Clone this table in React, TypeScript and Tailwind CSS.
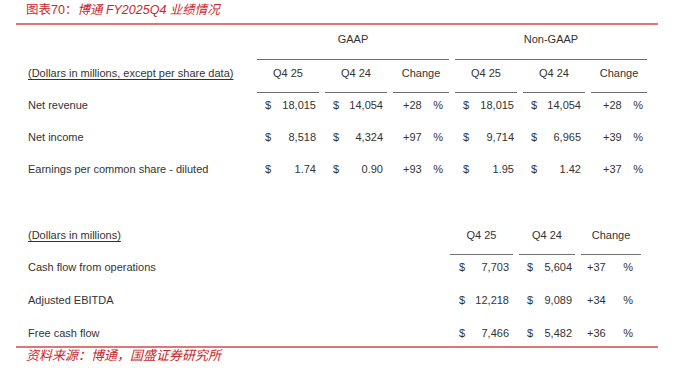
import React from 'react';

const gaapRows = [
  { label: 'Net revenue', v: ['18,015', '14,054', '+28', '18,015', '14,054', '+28'] },
  { label: 'Net income', v: ['8,518', '4,324', '+97', '9,714', '6,965', '+39'] },
  { label: 'Earnings per common share - diluted', v: ['1.74', '0.90', '+93', '1.95', '1.42', '+37'] },
];

const cashRows = [
  { label: 'Cash flow from operations', v: ['7,703', '5,604', '+37'] },
  { label: 'Adjusted EBITDA', v: ['12,218', '9,089', '+34'] },
  { label: 'Free cash flow', v: ['7,466', '5,482', '+36'] },
];

const Money = ({ value, cls }: { value: string; cls: string }) => (
  <div className={`flex justify-between ${cls}`}>
    <span>$</span>
    <span>{value}</span>
  </div>
);

const Change = ({ value, cls }: { value: string; cls: string }) => (
  <div className={`flex justify-between ${cls}`}>
    <span>{value}</span>
    <span>%</span>
  </div>
);

const App = () => {
  return (
    <div className="w-[674px] h-[375px] bg-white overflow-hidden font-['Liberation_Sans','Noto_Sans_CJK_SC',sans-serif] text-[11px] text-[#333]">
      {/* Title */}
      <div className="mx-4 h-[25px] border-b-2 border-[#e07575] pl-[10px] text-[12.5px] leading-5 text-[#c9262c]">
        图表70：<span className="italic">博通 FY2025Q4 业绩情况</span>
      </div>

      {/* GAAP / Non-GAAP table */}
      <div className="grid grid-cols-[223px_62px_62px_56px_62px_62px_56px] gap-x-[6px] pl-[28px] leading-4">
        <div className="h-[35px]" />
        <div className="col-span-3 h-[35px] pt-[6px] text-center border-b border-[#707070]">GAAP</div>
        <div className="col-span-3 h-[35px] pt-[6px] text-center border-b border-[#707070]">Non-GAAP</div>

        <div className="h-[33px] pt-[5px]">
          <span className="underline underline-offset-2">(Dollars in millions, except per share data)</span>
        </div>
        {['Q4 25', 'Q4 24', 'Change', 'Q4 25', 'Q4 24', 'Change'].map((h, i) => (
          <div key={i} className="h-[33px] pt-[5px] text-center border-b border-[#707070]">
            {h}
          </div>
        ))}

        {gaapRows.map((r) => (
          <React.Fragment key={r.label}>
            <div className="h-8 pt-1">{r.label}</div>
            <Money value={r.v[0]} cls="h-8 pt-1 pl-2 pr-[3px]" />
            <Money value={r.v[1]} cls="h-8 pt-1 pl-2 pr-[4px]" />
            <Change value={r.v[2]} cls="h-8 pt-1 pl-[10px] pr-[6px]" />
            <Money value={r.v[3]} cls="h-8 pt-1 pl-2 pr-[3px]" />
            <Money value={r.v[4]} cls="h-8 pt-1 pl-2 pr-[4px]" />
            <Change value={r.v[5]} cls="h-8 pt-1 pl-[12px] pr-[4px]" />
          </React.Fragment>
        ))}
      </div>

      {/* Cash flow table */}
      <div className="mt-[29px] grid grid-cols-[416px_63px_56px_60px] gap-x-[6px] pl-[28px] leading-4">
        <div className="h-[37px] pt-[9px]">
          <span className="underline underline-offset-2">(Dollars in millions)</span>
        </div>
        {['Q4 25', 'Q4 24', 'Change'].map((h, i) => (
          <div key={i} className="h-[37px] pt-[9px] text-center border-b border-[#707070]">
            {h}
          </div>
        ))}

        {cashRows.map((r, idx) => {
          const h = idx === cashRows.length - 1 ? 'h-[25px]' : 'h-[33px]';
          return (
            <React.Fragment key={r.label}>
              <div className={`${h} pt-1`}>{r.label}</div>
              <Money value={r.v[0]} cls={`${h} pt-1 pl-[9px] pr-[4px]`} />
              <Money value={r.v[1]} cls={`${h} pt-1 pl-2 pr-[3px]`} />
              <Change value={r.v[2]} cls={`${h} pt-1 pl-[6px] pr-[8px]`} />
            </React.Fragment>
          );
        })}
      </div>

      {/* Source */}
      <div className="mx-4 border-t-2 border-[#e07575] pl-[10px] text-[13px] leading-4 italic text-[#c9262c]">
        资料来源：博通，国盛证券研究所
      </div>
    </div>
  );
};

export default App;
